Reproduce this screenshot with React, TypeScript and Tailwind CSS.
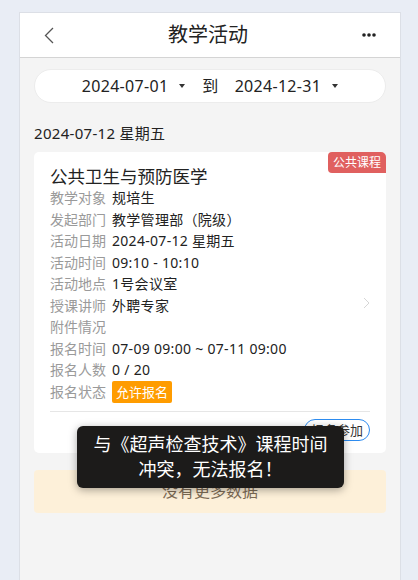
import React from 'react';

const rows: { label: string; value?: string }[] = [
  { label: '教学对象', value: '规培生' },
  { label: '发起部门', value: '教学管理部（院级）' },
  { label: '活动日期', value: '2024-07-12 星期五' },
  { label: '活动时间', value: '09:10 - 10:10' },
  { label: '活动地点', value: '1号会议室' },
  { label: '授课讲师', value: '外聘专家' },
  { label: '附件情况' },
  { label: '报名时间', value: '07-09 09:00 ~ 07-11 09:00' },
  { label: '报名人数', value: '0 / 20' },
];

const Caret = () => (
  <svg width="6" height="4" viewBox="0 0 6 4" className="ml-[11px]">
    <path d="M0 0 L6 0 L3 4 Z" fill="#333" />
  </svg>
);

export default function App() {
  return (
    <div
      className="min-h-[580px] bg-[#e9edf5] pl-[19px] pr-[17px] pt-[12px]"
      style={{ fontFamily: '"Noto Sans", "Noto Sans CJK SC", sans-serif' }}
    >
      <div className="relative min-h-[568px] bg-[#f4f4f4] border-x border-t border-[#dcdfe6]">
        {/* header */}
        <div className="h-[45px] bg-white border-b border-[#d4d4d4] flex items-center justify-between px-[24px]">
          <svg width="10" height="17" viewBox="0 0 10 17">
            <path d="M9 1 L1.5 8.5 L9 16" fill="none" stroke="#555" strokeWidth="1.3" />
          </svg>
          <div className="text-[20px] text-[#222] leading-none">教学活动</div>
          <svg width="14" height="4" viewBox="0 0 14 4">
            <circle cx="2" cy="2" r="1.8" fill="#222" />
            <circle cx="7" cy="2" r="1.8" fill="#222" />
            <circle cx="12" cy="2" r="1.8" fill="#222" />
          </svg>
        </div>

        <div className="px-[14px]">
          {/* date range */}
          <div className="mt-[11px] h-[34px] bg-white rounded-full border border-[#ececec] flex items-center justify-center text-[16px] tracking-[0.3px] text-[#222]">
            <span>2024-07-01</span>
            <Caret />
            <span className="ml-[17px] mr-[16px]">到</span>
            <span>2024-12-31</span>
            <Caret />
          </div>

          <div className="mt-[19px] text-[15px] tracking-[0.3px] text-[#222] leading-[22px]">2024-07-12 星期五</div>

          {/* card */}
          <div className="relative mt-[8px] bg-white rounded-[5px] px-[16px] pt-[12px] pb-[12px]">
            <div className="absolute top-0 right-0 h-[21px] px-[5px] bg-[#e0605f] text-white text-[12px] leading-[21px] rounded-tr-[5px] rounded-l-[4px]">
              公共课程
            </div>
            <div className="text-[17.5px] text-[#222] leading-[24px]">公共卫生与预防医学</div>
            <div className="mt-[-1px] text-[14px] leading-[21.5px]">
              {rows.map((r) => (
                <div key={r.label} className="flex">
                  <span className="w-[62px] shrink-0 text-[#9a9a9a]">{r.label}</span>
                  <span className="text-[#222] tracking-[0.3px]">{r.value}</span>
                </div>
              ))}
              <div className="flex items-center">
                <span className="w-[62px] shrink-0 text-[#9a9a9a]">报名状态</span>
                <span className="h-[22px] px-[4px] rounded-[2px] bg-[#ff9c00] text-white text-[13px] leading-[22px]">
                  允许报名
                </span>
              </div>
            </div>
            <svg
              width="7"
              height="12"
              viewBox="0 0 7 12"
              className="absolute right-[16px] top-[145px]"
            >
              <path d="M1 1 L6 6 L1 11" fill="none" stroke="#d6d6d6" strokeWidth="1" />
            </svg>
            <div className="mt-[8px] border-t border-[#e6e6e6]" />
            <div className="mt-[7px] flex justify-end">
              <div className="h-[22px] px-[6px] rounded-full border border-[#2d8cf0] text-[13px] leading-[20px] text-[#333]">
                报名参加
              </div>
            </div>
          </div>

          <div className="mt-[17px] h-[43px] rounded-[4px] bg-[#fdf0d9] flex items-center justify-center text-[16px] text-[#7d6b55]">
            没有更多数据
          </div>
        </div>

        {/* toast */}
        <div className="absolute left-[57px] top-[413px] w-[267px] rounded-[6px] bg-[#1c1b1a] shadow-[0_2px_8px_rgba(0,0,0,0.35)] px-[14px] py-[6px] text-center text-white text-[18px] leading-[25px]">
          与《超声检查技术》课程时间
          <br />
          冲突，无法报名！
        </div>
      </div>
    </div>
  );
}
